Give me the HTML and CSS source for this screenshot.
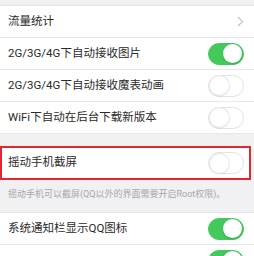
FILE: index.html
```html
<!DOCTYPE html>
<html lang="zh">
<head>
<meta charset="utf-8">
<link rel="stylesheet" href="styles.css">
</head>
<body>
<div class="group first">
  <div class="row"><span class="label">流量统计</span>
    <svg class="chev" width="7" height="11" viewBox="0 0 7 11"><path d="M1 1 L5.5 5.5 L1 10" fill="none" stroke="#c7c7cc" stroke-width="1.4"/></svg>
  </div>
  <div class="row"><span class="label">2G/3G/4G下自动接收图片</span><span class="toggle on"><span class="knob"></span></span></div>
  <div class="row"><span class="label">2G/3G/4G下自动接收魔表动画</span><span class="toggle"><span class="knob"></span></span></div>
  <div class="row"><span class="label">WiFi下自动在后台下载新版本</span><span class="toggle"><span class="knob"></span></span></div>
</div>
<div class="group highlight">
  <div class="row"><span class="label">摇动手机截屏</span><span class="toggle"><span class="knob"></span></span></div>
</div>
<p class="caption">摇动手机可以截屏(QQ以外的界面需要开启Root权限)。</p>
<div class="group">
  <div class="row"><span class="label">系统通知栏显示QQ图标</span><span class="toggle on"><span class="knob"></span></span></div>
  <div class="row"><span class="label">&nbsp;</span><span class="toggle on"><span class="knob"></span></span></div>
</div>
</body>
</html>
```
FILE: styles.css
```css
html, body {
  margin: 0;
  padding: 0;
}
body {
  background: #f1f1f3;
  font-family: "Roboto", "Noto Sans CJK SC", sans-serif;
  color: #2a2a2a;
  width: 254px;
  height: 256px;
  overflow: hidden;
}
.group {
  background: #fff;
  border-top: 1px solid #e6e6e6;
}
.group.first {
  margin-top: 5px;
}
.row {
  height: 31px;
  display: flex;
  align-items: center;
  justify-content: space-between;
  padding: 0 10px 0 8px;
  border-bottom: 1px solid #e8e8e8;
}
.label {
  font-size: 11.5px;
  line-height: 1;
}
.highlight {
  margin-top: 12px;
  margin-right: 3px;
  border: 2px solid #e0282e;
}
.highlight .row {
  border-bottom: none;
  height: 30px;
  padding: 0 5px 0 6px;
}
.caption {
  margin: 0;
  height: 32px;
  padding: 0 8px;
  font-size: 9px;
  line-height: 28px;
  color: #a6a6a6;
}
.toggle {
  width: 36px;
  height: 22px;
  border-radius: 11px;
  box-sizing: border-box;
  border: 1px solid #e3e3e3;
  background: #fff;
  display: flex;
  align-items: center;
  padding: 0 1px;
}
.toggle .knob {
  width: 19px;
  height: 19px;
  border-radius: 50%;
  background: #fff;
  box-shadow: 0 0 0 1px #e6e6e6, 0 1px 2px rgba(0,0,0,0.12);
}
.toggle.on {
  background: #44c95c;
  border-color: #44c95c;
  justify-content: flex-end;
}
.toggle.on .knob {
  box-shadow: 0 1px 2px rgba(0,0,0,0.15);
}
```
